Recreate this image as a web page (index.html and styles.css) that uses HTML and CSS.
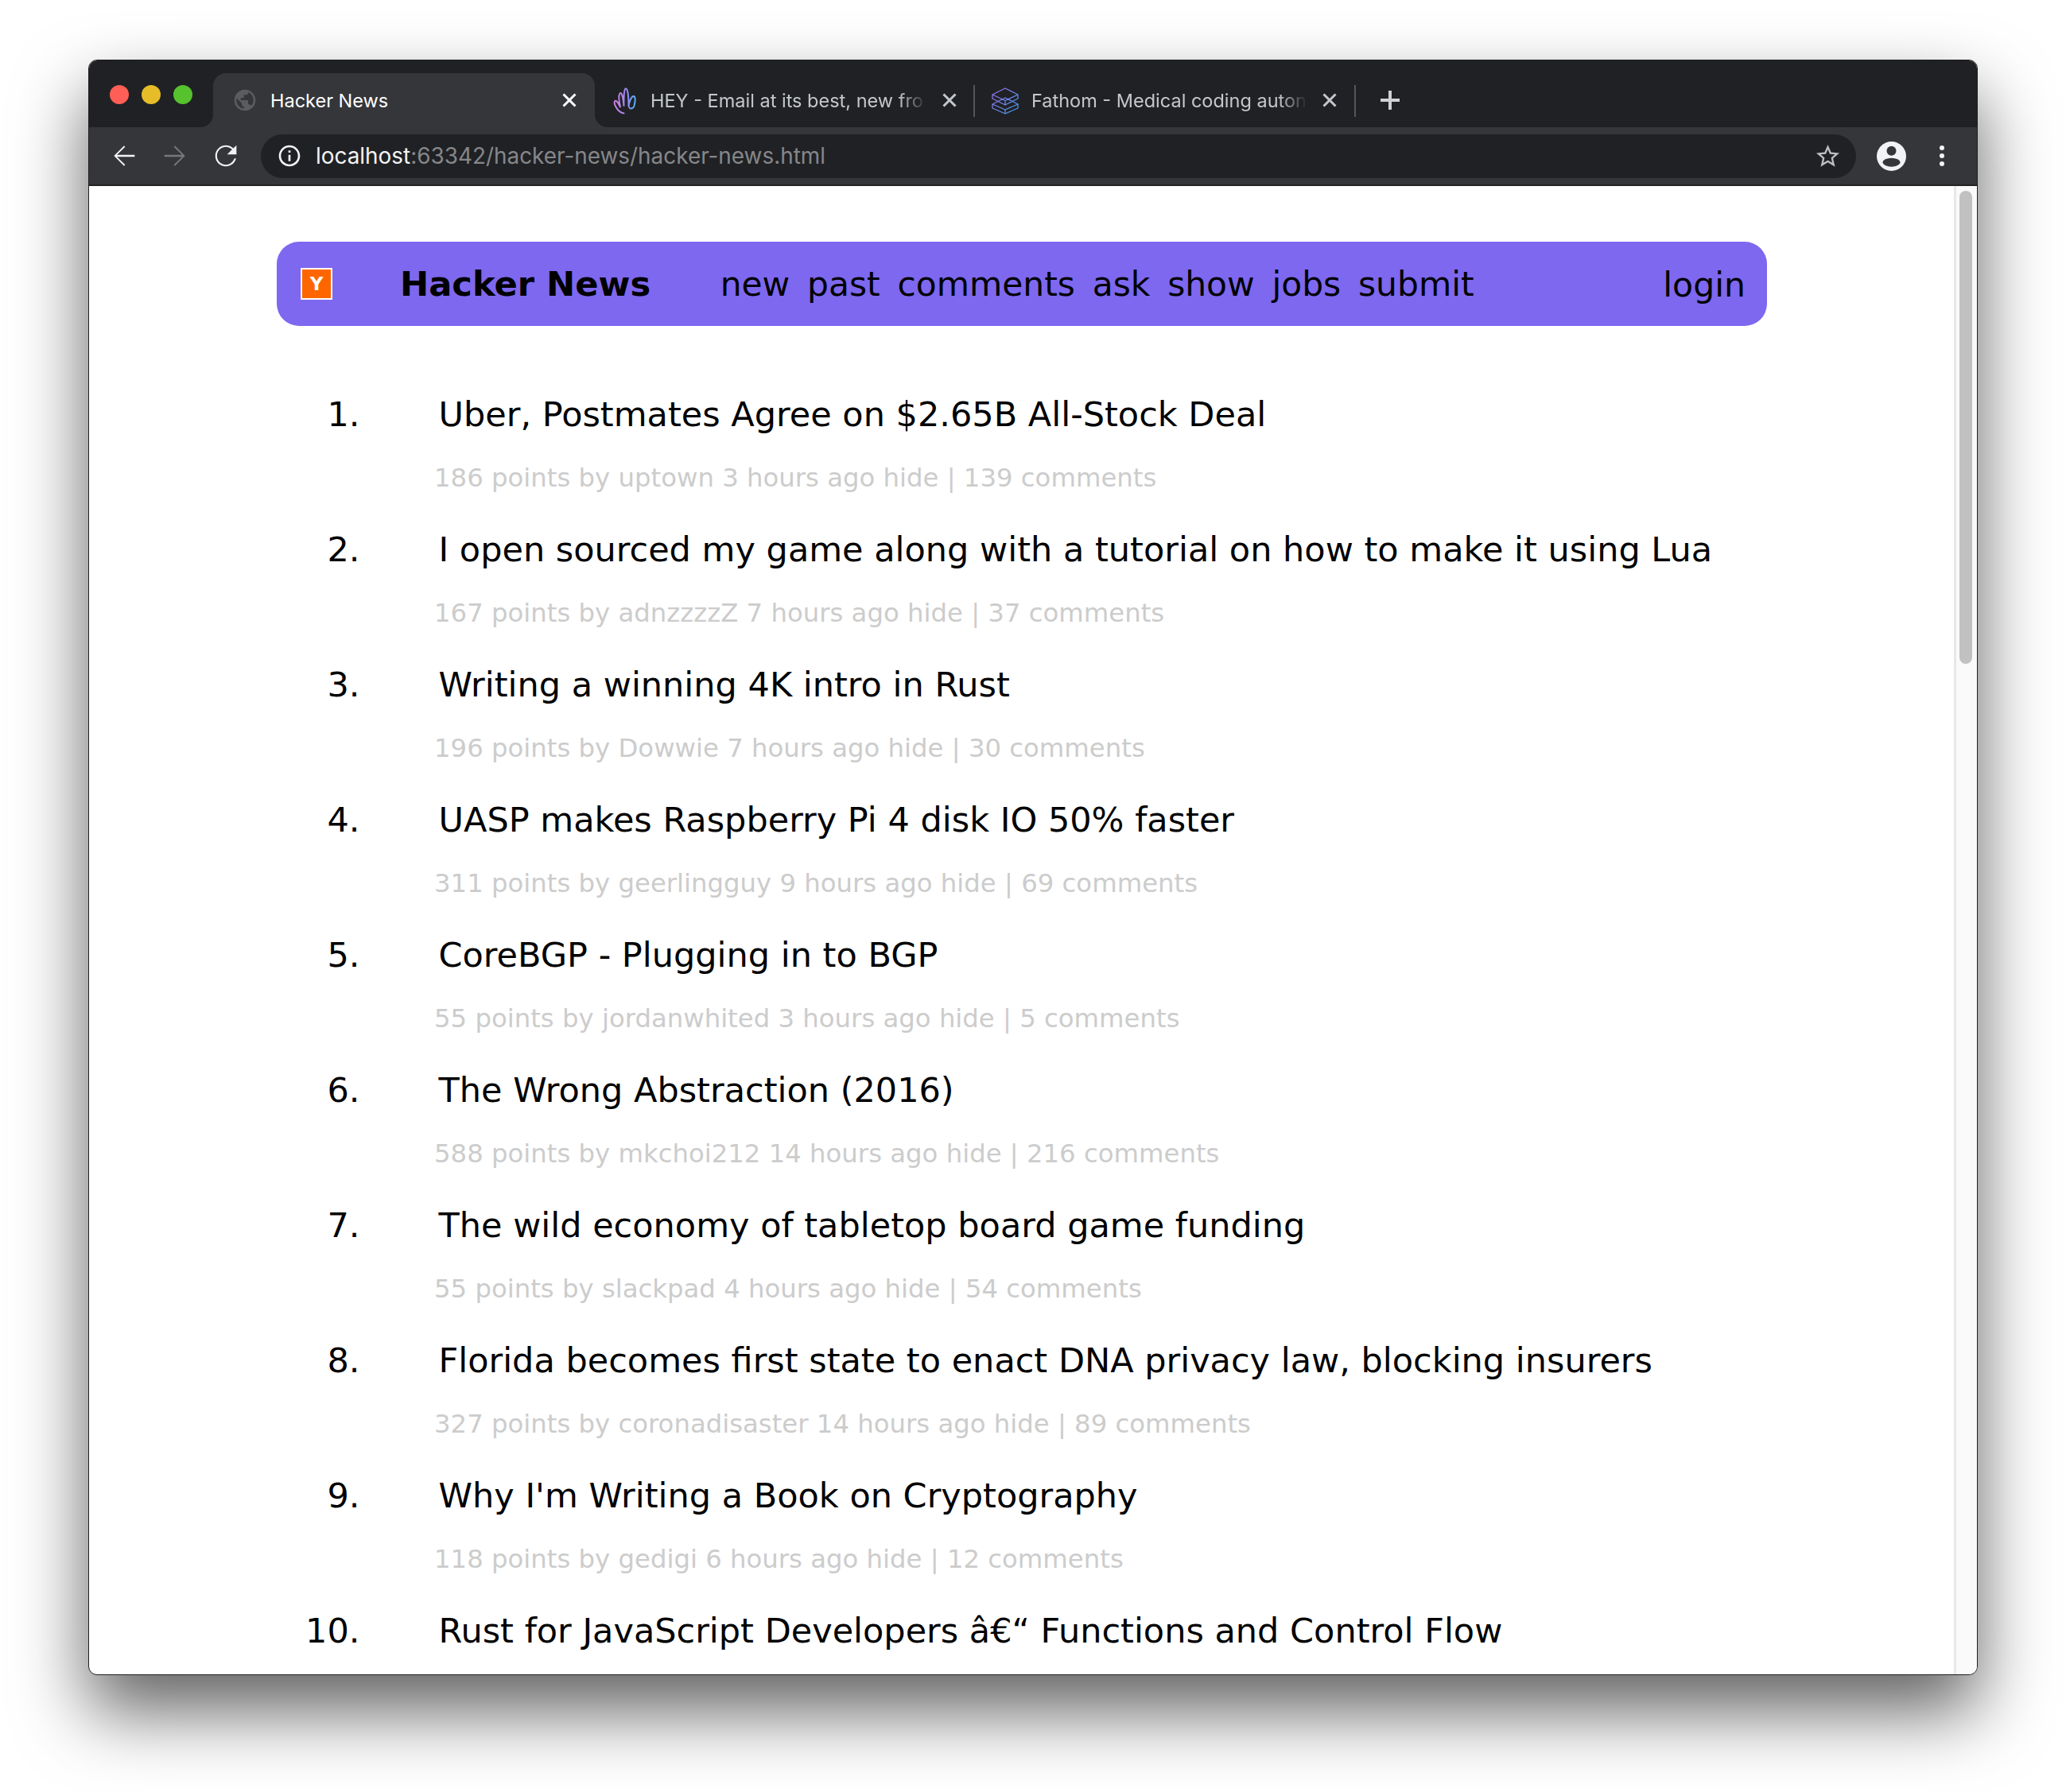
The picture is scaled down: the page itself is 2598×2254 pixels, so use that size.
FILE: index.html
```html
<!DOCTYPE html>
<html lang="en">
<head>
    <meta charset="UTF-8">
    <title>Hacker News</title>
    <link rel="stylesheet" href="styles.css">
</head>
<body>

<div class="window">
    <!-- tabs -->
    <div class="tab-strip">
        <div class="lights">
            <span class="light red"></span>
            <span class="light yellow"></span>
            <span class="light green"></span>
        </div>
        <div class="tab active">
            <svg class="favicon" viewBox="0 0 24 24"><path fill="#5b5c60" d="M12 2C6.48 2 2 6.48 2 12s4.48 10 10 10 10-4.48 10-10S17.52 2 12 2zm-1 17.93c-3.95-.49-7-3.85-7-7.93 0-.62.08-1.21.21-1.79L9 15v1c0 1.1.9 2 2 2v1.93zm6.9-2.54c-.26-.81-1-1.39-1.9-1.39h-1v-3c0-.55-.45-1-1-1H8v-2h2c.55 0 1-.45 1-1V7h2c1.1 0 2-.9 2-2v-.41c2.93 1.19 5 4.06 5 7.41 0 2.08-.8 3.97-2.1 5.39z"/></svg>
            <span class="tab-title">Hacker News</span>
            <svg class="tab-close" viewBox="0 0 24 24"><path d="M4.500 4.500l15 15M19.500 4.500l-15 15"/></svg>
        </div>
        <div class="tab hey">
            <svg class="site-icon" viewBox="0 0 50 50" fill="none">
                <defs>
                    <linearGradient id="hand" x1="0" y1="0" x2="1" y2="0">
                        <stop offset="0" stop-color="#cf7fe0"/>
                        <stop offset="0.55" stop-color="#9c86ee"/>
                        <stop offset="1" stop-color="#56aef7"/>
                    </linearGradient>
                </defs>
                <path stroke="url(#hand)" stroke-width="2" stroke-linecap="round" stroke-linejoin="round" d="M24.500 41.500C19 41 16.500 37 14.500 33.500 12.800 30.500 11.800 28.500 13 26.500 14.500 24.500 16.500 27 20 33.500 18.500 27 17 20 19.500 16.500 21.500 14.500 23 17.500 24.500 32 24.300 22 24.500 12.500 26.500 10.500 28.800 9.500 30.500 16 30.500 32.500 31 28 33.500 20.500 36.500 20 39.500 20 39 26 37.500 32 36 36.500 32 36.500 31 33.500"/>
            </svg>
            <span class="tab-title fade">HEY - Email at its best, new fro</span>
            <svg class="tab-close dim" viewBox="0 0 24 24"><path d="M4.500 4.500l15 15M19.500 4.500l-15 15"/></svg>
        </div>
        <span class="tab-sep"></span>
        <div class="tab fathom">
            <svg class="site-icon" viewBox="0 0 50 50" fill="none">
                <defs>
                    <linearGradient id="layers" gradientUnits="userSpaceOnUse" x1="8" y1="10" x2="40" y2="42">
                        <stop offset="0" stop-color="#9a6ff0"/>
                        <stop offset="1" stop-color="#3f9be8"/>
                    </linearGradient>
                </defs>
                <path stroke="url(#layers)" stroke-width="1.300" stroke-linejoin="round" d="M24 10l16 8-16 7.500L8 18zM8 18v5l16 8 16-8v-5M24 22l16 8-16 7L8 30zM8 30v5l16 7 16-7v-5M24 25.500V31M24 37v5"/>
            </svg>
            <span class="tab-title fade">Fathom - Medical coding auton</span>
            <svg class="tab-close dim" viewBox="0 0 24 24"><path d="M4.500 4.500l15 15M19.500 4.500l-15 15"/></svg>
        </div>
        <span class="tab-sep"></span>
        <svg class="new-tab" viewBox="0 0 24 24"><path d="M12 0v24M0 12h24"/></svg>
    </div>

    <!-- address bar -->
    <div class="toolbar">
        <svg class="nav-icon" viewBox="0 0 24 24"><path fill="#f1f3f4" d="M20 11.300H6.700l6.100-6.100-.8-.8L4.400 12l7.600 7.600.8-.8-6.100-6.100H20z"/></svg>
        <svg class="nav-icon" viewBox="0 0 24 24"><path fill="#77787c" d="M4 11.300h13.300l-6.100-6.100.8-.8 7.600 7.600-7.600 7.600-.8-.8 6.100-6.100H4z"/></svg>
        <svg class="nav-icon" viewBox="0 0 24 24"><path fill="#f1f3f4" d="M17.650 6.350C16.200 4.900 14.210 4 12 4c-4.420 0-7.990 3.580-7.990 8s3.570 8 7.990 8c3.730 0 6.840-2.550 7.730-6h-1.300c-.82 2.330-3.040 4.700-6.430 4.700-3.700 0-6.690-3-6.690-6.700s3-6.700 6.690-6.700c1.850 0 3.500.77 4.700 1.970L13 11h7V4l-2.350 2.350z"/></svg>
        <div class="address">
            <svg class="info-icon" viewBox="0 0 24 24"><path fill="#f1f3f4" d="M11 7h2v2h-2zm0 4h2v6h-2zm1-9C6.480 2 2 6.480 2 12s4.480 10 10 10 10-4.480 10-10S17.520 2 12 2zm0 18c-4.410 0-8-3.590-8-8s3.590-8 8-8 8 3.590 8 8-3.590 8-8 8z"/></svg>
            <span class="url"><span class="url-host">localhost</span>:63342/hacker-news/hacker-news.html</span>
            <svg class="star" viewBox="0 0 24 24"><path fill="#bdbebf" d="M22 9.240l-7.190-.62L12 2 9.190 8.630 2 9.240l5.460 4.730L5.820 21 12 17.270 18.180 21l-1.630-7.030L22 9.240zM12 15.400l-3.760 2.270 1-4.280-3.320-2.880 4.380-.38L12 6.100l1.710 4.040 4.380.38-3.320 2.880 1 4.280L12 15.400z"/></svg>
        </div>
        <svg class="avatar" viewBox="0 0 37 37">
            <circle cx="18.500" cy="18.500" r="18.500" fill="#f1f3f4"/>
            <circle cx="18.500" cy="11.800" r="6" fill="#35363a"/>
            <ellipse cx="18.500" cy="26.200" rx="11" ry="5.500" fill="#35363a"/>
        </svg>
        <svg class="menu-dots" viewBox="0 0 6 26">
            <circle cx="3" cy="3" r="3"/>
            <circle cx="3" cy="13" r="3"/>
            <circle cx="3" cy="23" r="3"/>
        </svg>
    </div>

    <div class="viewport">
        <div class="page">
            <div class="nav">
                <span class="logo">Y</span>
                <span class="brand">Hacker News</span>
                <div class="links">
                    <span>new</span>
                    <span>past</span>
                    <span>comments</span>
                    <span>ask</span>
                    <span>show</span>
                    <span>jobs</span>
                    <span>submit</span>
                </div>
                <span class="login">login</span>
            </div>

            <div class="stories">
                <div class="story">
                    <div class="rank">1.</div>
                    <div>
                        <div class="story-title">Uber, Postmates Agree on $2.65B All-Stock Deal</div>
                        <div class="story-meta">186 points by uptown 3 hours ago hide | 139 comments</div>
                    </div>
                </div>
                <div class="story">
                    <div class="rank">2.</div>
                    <div>
                        <div class="story-title">I open sourced my game along with a tutorial on how to make it using Lua</div>
                        <div class="story-meta">167 points by adnzzzzZ 7 hours ago hide | 37 comments</div>
                    </div>
                </div>
                <div class="story">
                    <div class="rank">3.</div>
                    <div>
                        <div class="story-title">Writing a winning 4K intro in Rust</div>
                        <div class="story-meta">196 points by Dowwie 7 hours ago hide | 30 comments</div>
                    </div>
                </div>
                <div class="story">
                    <div class="rank">4.</div>
                    <div>
                        <div class="story-title">UASP makes Raspberry Pi 4 disk IO 50% faster</div>
                        <div class="story-meta">311 points by geerlingguy 9 hours ago hide | 69 comments</div>
                    </div>
                </div>
                <div class="story">
                    <div class="rank">5.</div>
                    <div>
                        <div class="story-title">CoreBGP - Plugging in to BGP</div>
                        <div class="story-meta">55 points by jordanwhited 3 hours ago hide | 5 comments</div>
                    </div>
                </div>
                <div class="story">
                    <div class="rank">6.</div>
                    <div>
                        <div class="story-title">The Wrong Abstraction (2016)</div>
                        <div class="story-meta">588 points by mkchoi212 14 hours ago hide | 216 comments</div>
                    </div>
                </div>
                <div class="story">
                    <div class="rank">7.</div>
                    <div>
                        <div class="story-title">The wild economy of tabletop board game funding</div>
                        <div class="story-meta">55 points by slackpad 4 hours ago hide | 54 comments</div>
                    </div>
                </div>
                <div class="story">
                    <div class="rank">8.</div>
                    <div>
                        <div class="story-title">Florida becomes first state to enact DNA privacy law, blocking insurers</div>
                        <div class="story-meta">327 points by coronadisaster 14 hours ago hide | 89 comments</div>
                    </div>
                </div>
                <div class="story">
                    <div class="rank">9.</div>
                    <div>
                        <div class="story-title">Why I'm Writing a Book on Cryptography</div>
                        <div class="story-meta">118 points by gedigi 6 hours ago hide | 12 comments</div>
                    </div>
                </div>
                <div class="story">
                    <div class="rank">10.</div>
                    <div>
                        <div class="story-title">Rust for JavaScript Developers â€“ Functions and Control Flow</div>
                    </div>
                </div>
            </div>
        </div>
        <div class="scrollbar">
            <div class="scroll-thumb"></div>
        </div>
    </div>
</div>

</body>
</html>
```

FILE: styles.css
```css
body {
    margin: 0;
    height: 2254px;
    padding: 75px 111px 0 111px;
    box-sizing: border-box;
    overflow: hidden;
    background-color: #fff;
    font-family: "DejaVu Sans", sans-serif;
}

.window {
    height: 2032px;
    box-sizing: border-box;
    border: 1px solid #1f1f21;
    border-radius: 11px;
    overflow: hidden;
    display: flex;
    flex-direction: column;
    background-color: #fff;
    box-shadow: 0 45px 90px rgba(0, 0, 0, 0.62);
}

/* tab strip */
.tab-strip {
    height: 84px;
    flex-shrink: 0;
    display: flex;
    align-items: flex-end;
    background-color: #202124;
    font-family: Inter, sans-serif;
}

.lights {
    align-self: flex-start;
    display: flex;
    gap: 16px;
    margin: 31px 26px 0 26px;
}

.light {
    width: 24px;
    height: 24px;
    border-radius: 50%;
}

.red { background-color: #ff5f57; }
.yellow { background-color: #e6bd28; }
.green { background-color: #56c22d; }

.tab {
    height: 68px;
    box-sizing: border-box;
    display: flex;
    align-items: center;
    position: relative;
}

.tab.active {
    width: 480px;
    padding: 0 20px 0 24px;
    background-color: #35363a;
    border-radius: 16px 16px 0 0;
}

.tab.active::before,
.tab.active::after {
    content: "";
    position: absolute;
    bottom: 0;
    width: 16px;
    height: 16px;
}

.tab.active::before {
    left: -16px;
    background: radial-gradient(circle at 0 0, transparent 15.5px, #35363a 16.5px);
}

.tab.active::after {
    right: -16px;
    background: radial-gradient(circle at 100% 0, transparent 15.5px, #35363a 16.5px);
}

.tab.hey {
    width: 476px;
    padding: 0 18px 0 12px;
}

.tab.fathom {
    width: 477px;
    padding: 0 19px 0 14px;
}

.favicon {
    width: 32px;
    height: 32px;
    margin-right: 16px;
    flex-shrink: 0;
}

.site-icon {
    width: 50px;
    height: 50px;
    margin-right: 7px;
    flex-shrink: 0;
}

.tab.hey .site-icon {
    margin-right: 8px;
}

.tab-title {
    flex: 1;
    min-width: 0;
    white-space: nowrap;
    font-size: 23.5px;
    color: #fff;
}

.tab-title.fade {
    color: #c4c7cb;
    margin-right: 16px;
    -webkit-mask-image: linear-gradient(to right, #000 calc(100% - 36px), transparent);
    mask-image: linear-gradient(to right, #000 calc(100% - 36px), transparent);
}

.tab-close {
    width: 24px;
    height: 24px;
    flex-shrink: 0;
    fill: none;
    stroke: #fff;
    stroke-width: 3;
}

.tab-close.dim {
    stroke: #c4c7cb;
}

.tab-sep {
    width: 2px;
    height: 40px;
    margin-bottom: 13px;
    flex-shrink: 0;
    background-color: #55565a;
}

.new-tab {
    width: 24px;
    height: 24px;
    margin: 0 0 22px 31px;
    fill: none;
    stroke: #cfd1d4;
    stroke-width: 4;
}

/* toolbar */
.toolbar {
    height: 74px;
    flex-shrink: 0;
    box-sizing: border-box;
    border-bottom: 2px solid #232325;
    display: flex;
    align-items: center;
    gap: 24px;
    padding: 0 41px 0 24px;
    background-color: #35363a;
    font-family: Inter, sans-serif;
}

.nav-icon {
    width: 40px;
    height: 40px;
    flex-shrink: 0;
}

.address {
    flex: 1;
    height: 55px;
    display: flex;
    align-items: center;
    padding: 0 18px 0 20px;
    border-radius: 28px;
    background-color: #202124;
}

.info-icon {
    width: 32px;
    height: 32px;
    margin-right: 17px;
}

.url {
    flex: 1;
    font-size: 27.9px;
    color: #85878a;
}

.url-host {
    color: #f1f3f4;
}

.star {
    width: 35px;
    height: 35px;
}

.avatar {
    width: 37px;
    height: 37px;
    margin-left: 2px;
    flex-shrink: 0;
}

.menu-dots {
    width: 6px;
    height: 26px;
    margin-left: 18px;
    fill: #f1f3f4;
    flex-shrink: 0;
}

/* page */
.viewport {
    flex: 1;
    min-height: 0;
    display: flex;
}

.page {
    flex: 1;
    min-width: 0;
    padding-top: 70px;
    overflow: hidden;
}

.scrollbar {
    width: 26px;
    flex-shrink: 0;
    border-left: 3px solid #e8e8e8;
    background-color: #fafafa;
}

.scroll-thumb {
    width: 16px;
    height: 595px;
    margin: 6px 0 0 4px;
    border-radius: 8px;
    background-color: #c1c1c1;
}

.nav {
    width: 1874px;
    height: 106px;
    margin-left: 236px;
    box-sizing: border-box;
    padding: 0 27px 0 30px;
    display: flex;
    align-items: center;
    border-radius: 28px;
    background-color: #7d68ef;
    color: #000;
}

.logo {
    width: 40px;
    height: 40px;
    box-sizing: border-box;
    border: 2px solid #fff;
    display: flex;
    align-items: center;
    justify-content: center;
    background-color: #ff6600;
    color: #fff;
    font-size: 23px;
    font-weight: bold;
}

.brand {
    margin-left: 85px;
    font-size: 43.2px;
    font-weight: bold;
}

.links {
    display: flex;
    gap: 21.8px;
    margin-left: 87.5px;
    font-size: 42.4px;
}

.login {
    margin-left: auto;
    padding-top: 2px;
    font-size: 42.6px;
}

.stories {
    width: 1875px;
    margin-left: 235.5px;
    padding-top: 78px;
}

.story {
    height: 170px;
    display: flex;
}

.rank {
    width: 105px;
    margin-right: 95px;
    text-align: right;
    font-size: 43px;
    line-height: 66px;
    color: #000;
}

.story-title {
    padding-left: 4px;
    font-size: 43px;
    line-height: 66px;
    color: #000;
}

.story-meta {
    margin-top: 22px;
    margin-left: -1.5px;
    font-size: 32.35px;
    line-height: 50px;
    color: #ccc;
}
```
